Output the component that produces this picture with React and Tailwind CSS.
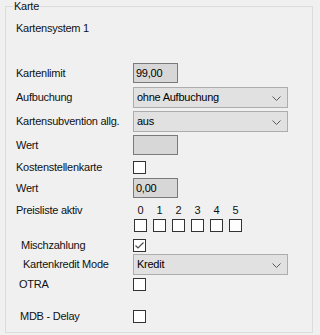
import React from 'react';

const font = { fontFamily: '"Liberation Sans", Arial, sans-serif' };

function Chevron() {
  return (
    <svg width="9" height="5" viewBox="0 0 9 5" className="absolute right-[6px] top-[8px]">
      <polyline points="0.5,0.5 4.5,4.5 8.5,0.5" fill="none" stroke="#5a5a5a" strokeWidth="1" />
    </svg>
  );
}

function Select({ value }) {
  return (
    <div className="relative w-[155px] h-[21px] bg-[#e1e1e1] border border-[#adadad] flex items-center pl-[3px] text-black">
      {value}
      <Chevron />
    </div>
  );
}

function TextBox({ value }) {
  return (
    <div className="w-[45px] h-[20px] bg-[#d7d7d7] border border-[#7a7a7a] flex items-center pl-[2px] text-black">
      {value}
    </div>
  );
}

function Check({ checked }) {
  return (
    <div className="w-[13px] h-[13px] bg-white border border-[#333333] flex items-center justify-center">
      {checked && (
        <svg width="11" height="11" viewBox="0 0 11 11">
          <polyline points="1.5,5.5 4,8 9.5,2.5" fill="none" stroke="#4a4a4a" strokeWidth="1.2" />
        </svg>
      )}
    </div>
  );
}

function Row({ label, children, pl = 'pl-[16px]', lw = 'w-[117px]', h, mt }) {
  return (
    <div className={`flex items-center ${pl} ${h} ${mt}`}>
      <span className={`${lw} shrink-0`}>{label}</span>
      {children}
    </div>
  );
}

export default function App() {
  return (
    <div className="w-[320px] h-[335px] bg-[#f0f0f0] text-[11px] tracking-[-0.25px] text-[#111] relative" style={font}>
      <div className="absolute left-[5px] top-[6px] w-[308px] h-[327px] border border-[#dcdcdc]" />
      <span className="absolute left-[13px] top-0 px-[1px] bg-[#f0f0f0] leading-[13px]">Karte</span>

      <div className="relative flex flex-col pt-[22px]">
        <div className="pl-[16px] h-[13px] leading-[13px]">Kartensystem 1</div>

        <Row label="Kartenlimit" h="h-[20px]" mt="mt-[28px]">
          <TextBox value="99,00" />
        </Row>
        <Row label="Aufbuchung" h="h-[21px]" mt="mt-[4px]">
          <Select value="ohne Aufbuchung" />
        </Row>
        <Row label="Kartensubvention allg." h="h-[21px]" mt="mt-[3px]">
          <Select value="aus" />
        </Row>
        <Row label="Wert" h="h-[20px]" mt="mt-[3px]">
          <TextBox value="" />
        </Row>
        <Row label="Kostenstellenkarte" h="h-[13px]" mt="mt-[6px]">
          <Check />
        </Row>
        <Row label="Wert" h="h-[20px]" mt="mt-[4px]">
          <TextBox value="0,00" />
        </Row>

        <div className="flex pl-[16px] mt-[6px]">
          <span className="w-[118px] shrink-0 h-[13px] leading-[13px]">Preisliste aktiv</span>
          <div className="flex gap-[6px]">
            {[0, 1, 2, 3, 4, 5].map((n) => (
              <div key={n} className="w-[13px] flex flex-col items-center gap-[2px]">
                <span className="h-[13px] leading-[13px]">{n}</span>
                <Check />
              </div>
            ))}
          </div>
        </div>

        <Row label="Mischzahlung" pl="pl-[21px]" lw="w-[112px]" h="h-[13px]" mt="mt-[7px]">
          <Check checked />
        </Row>
        <Row label="Kartenkredit Mode" pl="pl-[23px]" lw="w-[110px]" h="h-[21px]" mt="mt-[2px]">
          <Select value="Kredit" />
        </Row>
        <Row label="OTRA" pl="pl-[19px]" lw="w-[114px]" h="h-[13px]" mt="mt-[3px]">
          <Check />
        </Row>
        <Row label="MDB - Delay" pl="pl-[20px]" lw="w-[113px]" h="h-[13px]" mt="mt-[19px]">
          <Check />
        </Row>
      </div>
    </div>
  );
}
